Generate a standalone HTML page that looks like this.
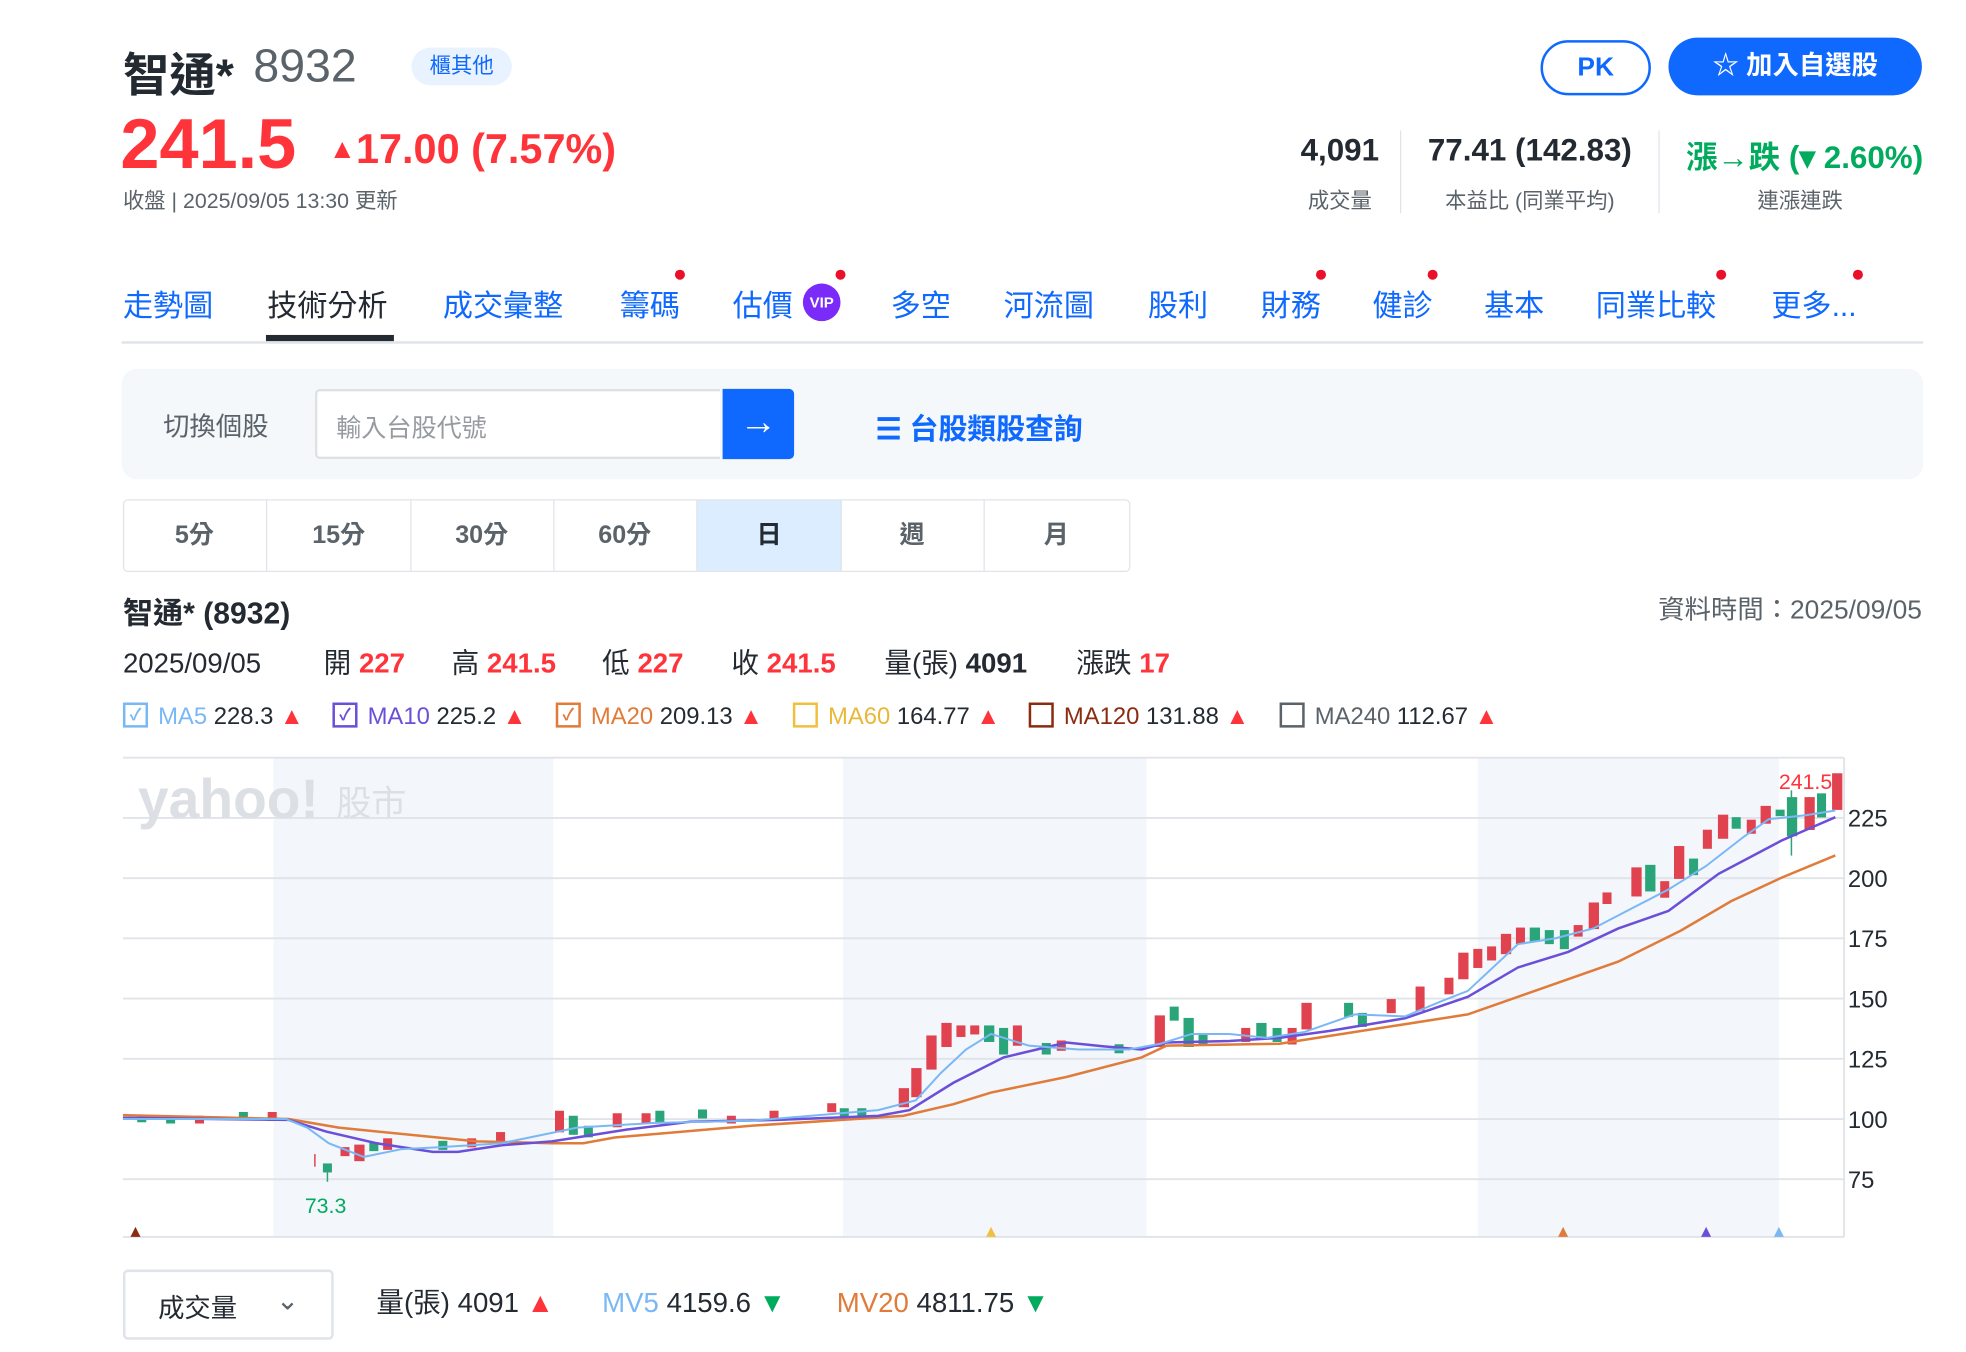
<!DOCTYPE html>
<html><head><meta charset="utf-8"><style>
html,body{margin:0;padding:0;background:#fff;overflow:hidden}
body{width:1966px;height:1352px}
#w{position:absolute;left:0;top:0;width:1568px;height:1078px;transform:scale(1.2545);transform-origin:0 0;font-family:"Liberation Sans","Noto Sans CJK TC",sans-serif;color:#232a31}
.a{position:absolute;white-space:nowrap}
.red{color:#ff333a}.blue{color:#0f69ff}.gray{color:#5b636a}
.tab{position:absolute;top:224px;font-size:24px;color:#0f69ff}
.dot{position:absolute;width:8px;height:8px;border-radius:50%;background:#eb0f29}
.pc{position:absolute;top:399px;height:56px;width:114px;border-right:1px solid #e0e4e9;font-size:20px;font-weight:bold;color:#5b636a;text-align:center;line-height:56px}
.ma{position:absolute;top:558px;height:28px;line-height:28px;font-size:19px;white-space:nowrap}
.o{position:absolute;top:514px;height:30px;line-height:30px;font-size:22px;white-space:nowrap}
.cb{display:inline-block;box-sizing:border-box;width:20px;height:20px;border:2px solid;vertical-align:middle;margin-right:8px;margin-top:-3px;font-size:13px;line-height:16px;text-align:center;font-weight:bold}
</style></head><body><div id="w">
<div class="a" style="left:98px;top:30px;font-size:37px;font-weight:bold">智通*</div>
<div class="a gray" style="left:202px;top:32px;font-size:37px">8932</div>
<div class="a blue" style="left:328px;top:38px;width:80px;height:30px;background:#e8f3ff;border-radius:15px;text-align:center;line-height:30px;font-size:17px">櫃其他</div>
<div class="a blue" style="left:1228px;top:32px;width:84px;height:40px;border:2px solid #0f69ff;border-radius:22px;text-align:center;line-height:40px;font-size:21px;font-weight:bold">PK</div>
<div class="a" style="left:1330px;top:30px;width:202px;height:46px;background:#0f69ff;border-radius:23px;color:#fff;text-align:center;line-height:46px;font-size:21px;font-weight:bold">☆ 加入自選股</div>
<div class="a red" style="left:96px;top:82px;font-size:56px;font-weight:bold">241.5</div>
<div class="a red" style="left:262px;top:100px;font-size:33px;font-weight:bold"><span style="font-size:22px;vertical-align:4px">▲</span>17.00 (7.57%)</div>
<div class="a gray" style="left:98px;top:146px;font-size:17px">收盤 | 2025/09/05 13:30 更新</div>
<div class="a" style="left:1020px;top:106px;width:96px;text-align:center;font-size:25px;font-weight:bold">4,091</div>
<div class="a gray" style="left:1020px;top:146px;width:96px;text-align:center;font-size:17px">成交量</div>
<div class="a" style="left:1116px;top:104px;width:1px;height:66px;background:#e0e4e9"></div>
<div class="a" style="left:1117px;top:106px;width:205px;text-align:center;font-size:25px;font-weight:bold">77.41 (142.83)</div>
<div class="a gray" style="left:1117px;top:146px;width:205px;text-align:center;font-size:17px">本益比 (同業平均)</div>
<div class="a" style="left:1322px;top:104px;width:1px;height:66px;background:#e0e4e9"></div>
<div class="a" style="left:1323px;top:106px;width:210px;text-align:right;font-size:25px;font-weight:bold;color:#00ab5e">漲→跌 (▾ 2.60%)</div>
<div class="a gray" style="left:1335px;top:146px;width:200px;text-align:center;font-size:17px">連漲連跌</div>

<div class="tab" style="left:98px">走勢圖</div>
<div class="tab" style="left:213px;color:#232a31">技術分析</div>
<div class="a" style="left:212px;top:267px;width:102px;height:5px;background:#232a31"></div>
<div class="tab" style="left:353px">成交彙整</div>
<div class="tab" style="left:494px">籌碼</div><div class="dot" style="left:538px;top:215px"></div>
<div class="tab" style="left:584px">估價</div>
<div class="a" style="left:640px;top:226px;width:30px;height:30px;border-radius:50%;background:#7b2bf9;color:#fff;font-size:12px;font-weight:bold;text-align:center;line-height:30px">VIP</div><div class="dot" style="left:666px;top:215px"></div>
<div class="tab" style="left:710px">多空</div>
<div class="tab" style="left:800px">河流圖</div>
<div class="tab" style="left:915px">股利</div>
<div class="tab" style="left:1005px">財務</div><div class="dot" style="left:1049px;top:215px"></div>
<div class="tab" style="left:1094px">健診</div><div class="dot" style="left:1138px;top:215px"></div>
<div class="tab" style="left:1183px">基本</div>
<div class="tab" style="left:1272px">同業比較</div><div class="dot" style="left:1368px;top:215px"></div>
<div class="tab" style="left:1412px">更多...</div><div class="dot" style="left:1477px;top:215px"></div>
<div class="a" style="left:97px;top:272px;width:1436px;height:2px;background:#e0e4e9"></div>

<div class="a" style="left:97px;top:294px;width:1436px;height:88px;background:#f5f8fb;border-radius:12px"></div>
<div class="a gray" style="left:130px;top:324px;font-size:21px">切換個股</div>
<div class="a" style="left:251px;top:310px;width:321px;height:52px;background:#fff;border:2px solid #dfe2e5;border-right:none;border-radius:4px 0 0 4px"></div>
<div class="a" style="left:268px;top:325px;font-size:20px;color:#979ba0">輸入台股代號</div>
<div class="a" style="left:576px;top:310px;width:57px;height:56px;background:#0f69ff;border-radius:0 4px 4px 0;color:#fff;text-align:center;line-height:54px;font-size:30px">→</div>
<div class="a blue" style="left:698px;top:323px;font-size:23px;font-weight:bold">☰ 台股類股查詢</div>

<div class="a" style="left:98px;top:398px;width:801px;height:56px;border:1px solid #e0e4e9;border-radius:4px"></div>
<div class="pc" style="left:98px">5分</div><div class="pc" style="left:213px">15分</div><div class="pc" style="left:327px">30分</div><div class="pc" style="left:441px">60分</div>
<div class="pc" style="left:556px;background:#dbedff;color:#232a31">日</div><div class="pc" style="left:670px">週</div><div class="pc" style="left:785px;border:none">月</div>

<div class="a" style="left:98px;top:469px;font-size:24px;font-weight:bold">智通* (8932)</div>
<div class="a gray" style="right:36px;top:470px;font-size:21px">資料時間：2025/09/05</div>
<div class="o" style="left:98px">2025/09/05</div>
<div class="o" style="left:258px">開 <b class="red">227</b></div>
<div class="o" style="left:360px">高 <b class="red">241.5</b></div>
<div class="o" style="left:480px">低 <b class="red">227</b></div>
<div class="o" style="left:583px">收 <b class="red">241.5</b></div>
<div class="o" style="left:705px">量(張) <b>4091</b></div>
<div class="o" style="left:858px">漲跌 <b class="red">17</b></div>
<div class="ma" style="left:98px"><span class="cb" style="border-color:#7ab8f5;color:#7ab8f5">✓</span><span style="color:#7ab8f5">MA5</span> 228.3 <span class="red">▲</span></div>
<div class="ma" style="left:265px"><span class="cb" style="border-color:#6b4fd8;color:#6b4fd8">✓</span><span style="color:#6b4fd8">MA10</span> 225.2 <span class="red">▲</span></div>
<div class="ma" style="left:443px"><span class="cb" style="border-color:#e07b39;color:#e07b39">✓</span><span style="color:#e07b39">MA20</span> 209.13 <span class="red">▲</span></div>
<div class="ma" style="left:632px"><span class="cb" style="border-color:#f0c040"></span><span style="color:#e8b83a">MA60</span> 164.77 <span class="red">▲</span></div>
<div class="ma" style="left:820px"><span class="cb" style="border-color:#8b2c10"></span><span style="color:#8b2c10">MA120</span> 131.88 <span class="red">▲</span></div>
<div class="ma" style="left:1020px"><span class="cb" style="border-color:#5b636a"></span><span class="gray">MA240</span> 112.67 <span class="red">▲</span></div>

<svg class="a" style="left:0;top:0" width="1568" height="1078">
<rect x="218" y="604" width="223" height="382" fill="#f3f6fa"/>
<rect x="672" y="604" width="242" height="382" fill="#f3f6fa"/>
<rect x="1178" y="604" width="240" height="382" fill="#f3f6fa"/>
<g stroke="#e0e4e9" stroke-width="1.5">
<line x1="98" y1="604" x2="1470" y2="604"/><line x1="98" y1="652" x2="1470" y2="652"/><line x1="98" y1="700" x2="1470" y2="700"/><line x1="98" y1="748" x2="1470" y2="748"/><line x1="98" y1="796" x2="1470" y2="796"/><line x1="98" y1="844" x2="1470" y2="844"/><line x1="98" y1="892" x2="1470" y2="892"/><line x1="98" y1="940" x2="1470" y2="940"/><line x1="98" y1="986" x2="1470" y2="986"/><line x1="1470" y1="604" x2="1470" y2="986"/></g>
<text x="110" y="652" font-size="44" font-weight="bold" fill="#dcdfe3" font-family="Liberation Sans,sans-serif">yahoo!</text>
<text x="268" y="650" font-size="28" fill="#dcdfe3" font-family="Liberation Sans,Noto Sans CJK TC,sans-serif">股市</text>
<g font-size="19" fill="#232a31" font-family="Liberation Sans,sans-serif">
<text x="1473" y="659">225</text><text x="1473" y="707">200</text><text x="1473" y="755">175</text><text x="1473" y="803">150</text><text x="1473" y="851">125</text><text x="1473" y="899">100</text><text x="1473" y="947">75</text></g>
<text x="243" y="967" font-size="17" fill="#00ab5e">73.3</text>
<text x="1418" y="629" font-size="17" fill="#ff333a">241.5</text>
<g stroke-width="1.2">
<g stroke="#e0434f" fill="#e0434f">
<rect x="156" y="890" width="6" height="5"/><rect x="214" y="887" width="6" height="6"/><line x1="251" y1="920" x2="251" y2="930"/><rect x="272" y="915" width="6" height="6"/><rect x="283" y="913" width="7" height="12"/><rect x="306" y="908" width="6" height="8"/><rect x="373" y="908" width="6" height="6"/><rect x="396" y="903" width="6" height="7"/><rect x="443" y="886" width="6" height="16"/><rect x="489" y="888" width="6" height="10"/><rect x="512" y="888" width="6" height="7"/><rect x="580" y="890" width="6" height="5"/><rect x="614" y="886" width="6" height="7"/><rect x="660" y="880" width="6" height="6"/><rect x="717" y="868" width="7" height="14"/><rect x="727" y="852" width="7" height="22"/><rect x="739" y="826" width="7" height="26"/><rect x="751" y="816" width="7" height="18"/><rect x="763" y="818" width="6" height="8"/><rect x="774" y="818" width="6" height="6"/><rect x="808" y="818" width="6" height="15"/><rect x="843" y="830" width="6" height="7"/><rect x="921" y="810" width="7" height="24"/><rect x="990" y="820" width="6" height="10"/><rect x="1027" y="820" width="6" height="12"/><rect x="1038" y="800" width="7" height="20"/><rect x="1106" y="797" width="6" height="10"/><rect x="1129" y="787" width="6" height="18"/><rect x="1152" y="780" width="6" height="12"/><rect x="1163" y="760" width="7" height="20"/><rect x="1175" y="757" width="6" height="14"/><rect x="1186" y="755" width="6" height="10"/><rect x="1197" y="745" width="7" height="15"/><rect x="1209" y="740" width="6" height="12"/><rect x="1255" y="738" width="6" height="8"/><rect x="1267" y="720" width="7" height="20"/><rect x="1278" y="712" width="6" height="8"/><rect x="1301" y="692" width="7" height="22"/><rect x="1324" y="703" width="6" height="12"/><rect x="1335" y="675" width="7" height="25"/><rect x="1358" y="662" width="6" height="14"/><rect x="1370" y="650" width="7" height="18"/><rect x="1393" y="654" width="6" height="10"/><rect x="1404" y="643" width="7" height="13"/><rect x="1439" y="636" width="7" height="25"/><rect x="1461" y="617" width="7" height="28"/></g>
<g stroke="#2aa57a" fill="#2aa57a">
<rect x="110" y="890" width="6" height="4"/><rect x="133" y="890" width="6" height="5"/><rect x="191" y="887" width="6" height="5"/><rect x="258" y="928" width="6" height="6"/><line x1="261" y1="928" x2="261" y2="942"/><rect x="295" y="911" width="6" height="6"/><rect x="350" y="910" width="6" height="6"/><rect x="454" y="890" width="6" height="14"/><rect x="466" y="898" width="6" height="8"/><rect x="523" y="886" width="6" height="8"/><rect x="557" y="885" width="6" height="6"/><rect x="670" y="884" width="6" height="6"/><rect x="684" y="884" width="6" height="5"/><rect x="785" y="818" width="7" height="12"/><rect x="797" y="820" width="6" height="20"/><rect x="831" y="832" width="6" height="8"/><rect x="889" y="833" width="6" height="6"/><rect x="933" y="803" width="6" height="10"/><rect x="944" y="812" width="7" height="22"/><rect x="956" y="825" width="6" height="8"/><rect x="1002" y="816" width="7" height="12"/><rect x="1015" y="820" width="6" height="10"/><rect x="1072" y="800" width="6" height="10"/><rect x="1083" y="808" width="6" height="10"/><rect x="1220" y="740" width="7" height="10"/><rect x="1232" y="742" width="6" height="10"/><rect x="1244" y="742" width="6" height="14"/><rect x="1312" y="690" width="7" height="20"/><rect x="1347" y="685" width="6" height="12"/><rect x="1381" y="652" width="6" height="8"/><rect x="1416" y="646" width="6" height="4"/><rect x="1425" y="636" width="7" height="30"/><line x1="1428" y1="630" x2="1428" y2="682"/><rect x="1449" y="633" width="6" height="18"/></g></g>
<g fill="none" transform="translate(0,3.5)">
<polyline stroke="#e07b39" stroke-width="2" points="98,885.4 230,888.5 270,895.4 380,906.3 440,907.8 465,907.8 490,903.2 600,893.8 720,886 760,876.7 790,867.4 850,855 910,839.4 930,830 1020,828.5 1060,822.2 1140,809.8 1170,805.1 1210,791.1 1290,763 1340,738.2 1380,714.8 1420,696.2 1463,678.4"/>
<polyline stroke="#6b4fd8" stroke-width="2" points="98,887.6 230,889.2 260,898.5 300,907.8 345,914.7 365,914.7 400,909.4 440,906.3 500,896.9 550,890.7 620,889.2 700,886 725,881.4 760,859.6 800,839.4 850,827.5 880,830.6 910,833.1 930,827.5 980,826.3 1020,823.8 1060,818.2 1120,808.2 1170,791.1 1210,767.7 1250,755.3 1290,736.6 1330,722.6 1370,693 1420,666.6 1445,655.7 1463,647.9"/>
<polyline stroke="#7ab8f5" stroke-width="1.6" points="98,888.5 228,888.5 245,895.4 262,907.8 290,918.7 320,912.5 350,911 400,907.8 460,895.4 520,891.7 600,889.8 700,881.4 730,873.6 750,851.8 770,833.1 790,820.7 820,830 860,833.1 900,833.1 925,828.5 950,820.7 980,820.7 1010,823.8 1040,819.1 1080,805.1 1120,806.7 1150,794.2 1170,786.4 1210,749.1 1240,744.4 1270,736.6 1300,721 1330,705.5 1360,686.8 1390,663.5 1410,649.5 1440,646.3 1463,642.6"/>
</g>
<polygon points="104,986 108,978 112,986" fill="#8b2c10"/><polygon points="786,986 790,978 794,986" fill="#f0c040"/><polygon points="1242,986 1246,978 1250,986" fill="#e07b39"/><polygon points="1356,986 1360,978 1364,986" fill="#6b4fd8"/><polygon points="1414,986 1418,978 1422,986" fill="#7ab8f5"/>
</svg>

<div class="a" style="left:98px;top:1012px;width:164px;height:52px;border:2px solid #e0e4e9;border-radius:4px"></div>
<div class="a" style="left:126px;top:1027px;font-size:21px;color:#232a31">成交量</div>
<div class="a gray" style="left:220px;top:1024px;font-size:22px">⌄</div>
<div class="a" style="left:300px;top:1024px;height:30px;line-height:30px;font-size:22px">量(張) 4091 <span class="red">▲</span></div>
<div class="a" style="left:480px;top:1024px;height:30px;line-height:30px;font-size:22px"><span style="color:#7ab8f5">MV5</span> 4159.6 <span style="color:#00ab5e">▼</span></div>
<div class="a" style="left:667px;top:1024px;height:30px;line-height:30px;font-size:22px"><span style="color:#e07b39">MV20</span> 4811.75 <span style="color:#00ab5e">▼</span></div>
</div></body></html>
